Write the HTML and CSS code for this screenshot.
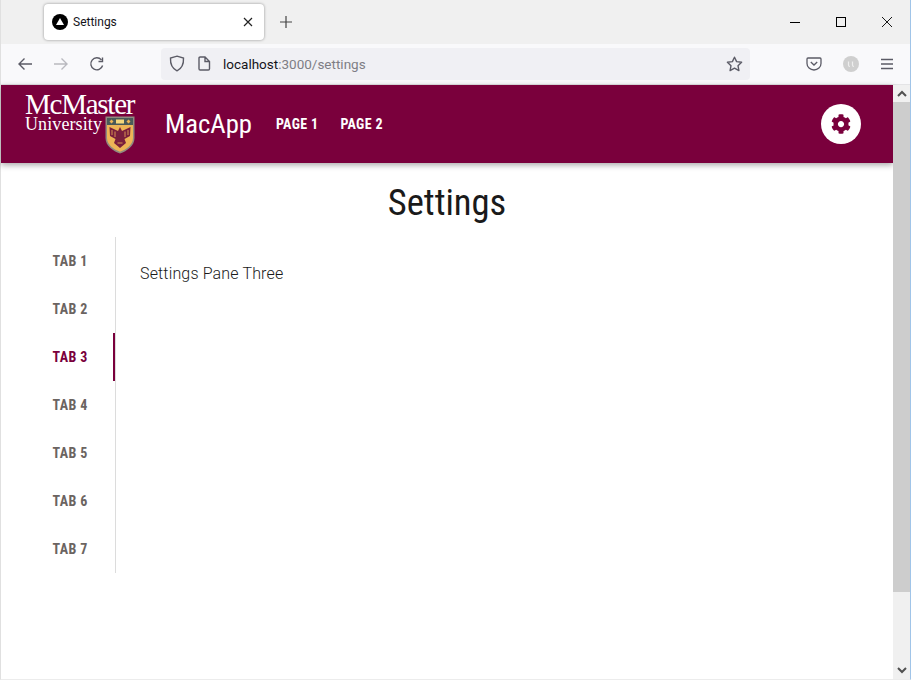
FILE: index.html
```html
<!DOCTYPE html>
<html lang="en">
<head>
    <meta charset="UTF-8">
    <meta name="viewport" content="width=device-width, initial-scale=1.0">
    <title>Settings</title>
    <link rel="stylesheet" href="styles.css">
</head>
<body>
    <div class="window">
        <div class="tabstrip">
            <div class="browser-tab">
                <svg class="favicon" width="16" height="16" viewBox="0 0 16 16"><circle cx="8" cy="8" r="8" fill="#000"/><path d="M8 4 L12 11 H4 Z" fill="#fff"/></svg>
                <span class="browser-tab-title">Settings</span>
                <svg class="tab-close" width="10" height="10" viewBox="0 0 10 10"><path d="M1 1 L9 9 M9 1 L1 9" stroke="#222" stroke-width="1.2"/></svg>
            </div>
            <svg class="new-tab" width="14" height="14" viewBox="0 0 14 14"><path d="M7 1 V13 M1 7 H13" stroke="#444" stroke-width="1.2"/></svg>
            <div class="window-controls">
                <svg width="12" height="12" viewBox="0 0 12 12"><path d="M1 6.5 H11" stroke="#000" stroke-width="1"/></svg>
                <svg width="12" height="12" viewBox="0 0 12 12"><rect x="1.5" y="1.5" width="9" height="9" fill="none" stroke="#000" stroke-width="1"/></svg>
                <svg width="12" height="12" viewBox="0 0 12 12"><path d="M1 1 L11 11 M11 1 L1 11" stroke="#000" stroke-width="0.9"/></svg>
            </div>
        </div>
        <div class="toolbar">
            <svg class="nav-icon" width="16" height="16" viewBox="0 0 16 16"><path d="M15 8 H2 M7.5 2.5 L2 8 L7.5 13.5" fill="none" stroke="#5b5b66" stroke-width="1.4"/></svg>
            <svg class="nav-icon" width="16" height="16" viewBox="0 0 16 16"><path d="M1 8 H14 M8.5 2.5 L14 8 L8.5 13.5" fill="none" stroke="#b9b9bf" stroke-width="1.4"/></svg>
            <svg class="nav-icon" width="16" height="16" viewBox="0 0 16 16"><path d="M13.6 9.5 A6 6 0 1 1 12.4 3.9 M13.5 1.5 V5.5 H9.5" fill="none" stroke="#5b5b66" stroke-width="1.4"/></svg>
            <div class="urlbar">
                <svg width="16" height="17" viewBox="0 0 16 17"><path d="M8 1.2 L14.5 3 C14.8 9 12.8 13.5 8 15.8 C3.2 13.5 1.2 9 1.5 3 Z" fill="none" stroke="#5b5b66" stroke-width="1.4"/></svg>
                <svg class="page-icon" width="14" height="15" viewBox="0 0 14 15"><path d="M2 2.2 Q2 1 3.2 1 H8 L12.5 5.5 V12.8 Q12.5 14 11.3 14 H3.2 Q2 14 2 12.8 Z M8 1 V5.5 H12.5" fill="none" stroke="#5b5b66" stroke-width="1.4"/></svg>
                <span class="url"><span class="url-host">localhost</span>:3000/settings</span>
                <svg class="star" width="17" height="16" viewBox="0 0 17 16"><path d="M8.5 1.2 L10.6 5.6 L15.6 6.3 L12 9.7 L12.9 14.6 L8.5 12.2 L4.1 14.6 L5 9.7 L1.4 6.3 L6.4 5.6 Z" fill="none" stroke="#5b5b66" stroke-width="1.4" stroke-linejoin="round"/></svg>
            </div>
            <svg class="pocket" width="16" height="14" viewBox="0 0 16 14"><path d="M1 2 Q1 1 2 1 H14 Q15 1 15 2 V6.5 A7 6.5 0 0 1 1 6.5 Z M4.8 5 L8 8 L11.2 5" fill="none" stroke="#5b5b66" stroke-width="1.3"/></svg>
            <svg class="avatar" width="16" height="16" viewBox="0 0 16 16"><circle cx="8" cy="8" r="8" fill="#cfcfcf"/><path d="M5.5 5.5 V9 Q5.5 10.5 7 10.5 M9.5 5.5 V9 Q9.5 10.5 11 10.5" fill="none" stroke="#eee" stroke-width="1.2"/></svg>
            <svg class="burger" width="14" height="12" viewBox="0 0 14 12"><path d="M1 1.5 H13 M1 6 H13 M1 10.5 H13" stroke="#5b5b66" stroke-width="1.3"/></svg>
        </div>
        <div class="viewport">
            <div class="page">
                <header class="appbar">
                    <div class="logo">
                        <div class="logo-name">McMaster</div>
                        <div class="logo-row">
                            <span class="logo-sub">University</span>
                            <svg class="crest" width="30" height="38" viewBox="0 0 30 38">
                                <path d="M0.5 0.5 H29.5 V22 C29.5 30 22 35 15 37.5 C8 35 0.5 30 0.5 22 Z" fill="#8f8a80"/>
                                <rect x="2" y="2" width="26" height="7" fill="#4a5a58"/>
                                <path d="M2 9 H28 V22 C28 29 21 33.5 15 35.8 C9 33.5 2 29 2 22 Z" fill="#edb456"/>
                                <rect x="11" y="3.5" width="8" height="4" fill="#f3d77c"/>
                                <path d="M6.5 3.5 L8.5 5.5 L6.5 7.5 L4.5 5.5 Z M23.5 3.5 L25.5 5.5 L23.5 7.5 L21.5 5.5 Z" fill="#edb456"/>
                                <path d="M15 11 L17 15 L25.5 11 L25 20 L19.5 23 L21 27 L15 32 L9 27 L10.5 23 L5 20 L4.5 11 L13 15 Z" fill="#7a1f3c"/>
                                <path d="M7 14 V19 M10 15.5 V21 M23 14 V19 M20 15.5 V21 M12.5 27 H17.5" stroke="#edb456" stroke-width="0.8"/>
                            </svg>
                        </div>
                    </div>
                    <a class="brand">MacApp</a>
                    <nav class="appnav">
                        <a class="appnav-link">PAGE 1</a>
                        <a class="appnav-link">PAGE 2</a>
                    </nav>
                    <button class="settings-btn">
                        <svg width="20" height="20" viewBox="0 0 512 512"><path fill="#7a003c" d="M487.4 315.7l-42.6-24.6c4.3-23.2 4.3-47 0-70.2l42.6-24.6c4.9-2.8 7.1-8.6 5.5-14-11.1-35.6-30-67.8-54.7-94.6-3.8-4.1-10-5.1-14.8-2.3L380.8 110c-17.9-15.4-38.5-27.3-60.8-35.1V25.8c0-5.6-3.9-10.5-9.4-11.7-36.7-8.2-74.3-7.8-109.2 0-5.5 1.2-9.4 6.1-9.4 11.7V75c-22.2 7.9-42.8 19.8-60.8 35.1L88.7 85.5c-4.9-2.8-11-1.9-14.8 2.3-24.7 26.7-43.6 58.9-54.7 94.6-1.7 5.4.6 11.2 5.5 14L67.3 221c-4.3 23.2-4.3 47 0 70.2l-42.6 24.6c-4.9 2.8-7.1 8.6-5.5 14 11.1 35.6 30 67.8 54.7 94.6 3.8 4.1 10 5.1 14.8 2.3l42.6-24.6c17.9 15.4 38.5 27.3 60.8 35.1v49.2c0 5.6 3.9 10.5 9.4 11.7 36.7 8.2 74.3 7.8 109.2 0 5.5-1.2 9.4-6.1 9.4-11.7v-49.2c22.2-7.9 42.8-19.8 60.8-35.1l42.6 24.6c4.9 2.8 11 1.9 14.8-2.3 24.7-26.7 43.6-58.9 54.7-94.6 1.5-5.5-.7-11.3-5.6-14.1zM256 336c-44.1 0-80-35.9-80-80s35.9-80 80-80 80 35.9 80 80-35.9 80-80 80z"/></svg>
                    </button>
                </header>
                <h1 class="page-title">Settings</h1>
                <div class="settings">
                    <div class="tablist">
                        <div class="tab">TAB 1</div>
                        <div class="tab">TAB 2</div>
                        <div class="tab tab-active">TAB 3</div>
                        <div class="tab">TAB 4</div>
                        <div class="tab">TAB 5</div>
                        <div class="tab">TAB 6</div>
                        <div class="tab">TAB 7</div>
                    </div>
                    <div class="pane">Settings Pane Three</div>
                </div>
            </div>
            <div class="scrollbar">
                <div class="scroll-btn">
                    <svg width="10" height="7" viewBox="0 0 10 7"><path d="M1 6 L5 2 L9 6" fill="none" stroke="#505050" stroke-width="2"/></svg>
                </div>
                <div class="scroll-thumb"></div>
                <div class="scroll-track"></div>
                <div class="scroll-btn">
                    <svg width="10" height="7" viewBox="0 0 10 7"><path d="M1 1 L5 5 L9 1" fill="none" stroke="#505050" stroke-width="2"/></svg>
                </div>
            </div>
        </div>
    </div>
</body>
</html>
```

FILE: styles.css
```css
* {
    box-sizing: border-box;
}
html, body {
    margin: 0;
    height: 100%;
    overflow: hidden;
}
body {
    font-family: Roboto, sans-serif;
    background-color: #fff;
}
.window {
    height: 680px;
    display: flex;
    flex-direction: column;
    border-left: 1px solid #e0e0e0;
    border-right: 1px solid #a0c4e8;
    border-bottom: 1px solid #ececec;
}

/* browser chrome */
.tabstrip {
    height: 44px;
    display: flex;
    align-items: center;
    background-color: #f0f0f0;
    padding-left: 43px;
}
.browser-tab {
    width: 220px;
    height: 36px;
    display: flex;
    align-items: center;
    padding: 0 11px 0 8px;
    background-color: #fff;
    border-radius: 4px;
    box-shadow: 0 0 3px rgba(0,0,0,0.4);
}
.browser-tab-title {
    margin-left: 5px;
    flex: 1;
    font-size: 12px;
    color: #15141a;
}
.new-tab {
    margin-left: 15px;
}
.window-controls {
    margin-left: auto;
    display: flex;
    gap: 34px;
    padding-right: 17px;
}
.toolbar {
    height: 41px;
    display: flex;
    align-items: center;
    background-color: #f9f9fb;
    padding-left: 16px;
    border-bottom: 1px solid #e4e4e6;
}
.nav-icon {
    margin-right: 20px;
}
.urlbar {
    width: 589px;
    height: 32px;
    margin-left: 36px;
    margin-top: -1px;
    display: flex;
    align-items: center;
    padding: 0 7px 0 8px;
    background-color: #f0f0f4;
    border-radius: 4px;
}
.page-icon {
    margin-left: 12px;
}
.url {
    margin-left: 12px;
    font-size: 13.5px;
    color: #7e7e85;
}
.url-host {
    color: #15141a;
}
.star {
    margin-left: auto;
}
.pocket {
    margin-left: 56px;
}
.avatar {
    margin-left: 21px;
}
.burger {
    margin-left: 21px;
}

/* page */
.viewport {
    flex: 1;
    display: flex;
    min-height: 0;
}
.page {
    flex: 1;
    min-width: 0;
}
.appbar {
    height: 78px;
    display: flex;
    align-items: center;
    padding: 0 32px 0 24px;
    background-color: #7a003c;
    box-shadow: 0 2px 6px rgba(0,0,0,0.35);
    color: #fff;
}
.logo {
    width: 112px;
    height: 78px;
    padding-top: 7px;
    flex-shrink: 0;
}
.logo-name {
    font-family: "Liberation Serif", serif;
    font-size: 29px;
    line-height: 24px;
    letter-spacing: -1.25px;
    white-space: nowrap;
}
.logo-row {
    display: flex;
    align-items: flex-start;
}
.logo-sub {
    font-family: "Liberation Serif", serif;
    font-size: 18px;
    line-height: 18px;
    letter-spacing: 0.1px;
    margin-top: -1px;
}
.crest {
    margin-left: 3px;
    flex-shrink: 0;
}
.brand {
    margin-left: 28px;
    font-family: "Roboto Condensed", "Liberation Sans Narrow", Roboto, sans-serif;
    font-stretch: condensed;
    font-size: 26.7px;
}
.appnav {
    display: flex;
    gap: 22px;
    margin-left: 24px;
}
.appnav-link {
    font-family: "Roboto Condensed", "Liberation Sans Narrow", Roboto, sans-serif;
    font-stretch: condensed;
    font-size: 14px;
    font-weight: 700;
    letter-spacing: 0.35px;
}
.settings-btn {
    margin-left: auto;
    width: 40px;
    height: 40px;
    padding: 0;
    border: none;
    border-radius: 50%;
    background-color: #fff;
    display: flex;
    align-items: center;
    justify-content: center;
}
.page-title {
    margin: 0;
    padding-top: 18px;
    height: 74px;
    text-align: center;
    font-family: "Roboto Condensed", "Liberation Sans Narrow", Roboto, sans-serif;
    font-stretch: condensed;
    font-size: 36.6px;
    line-height: 44px;
    font-weight: 400;
    color: #1a1a1a;
}
.settings {
    display: flex;
}
.tablist {
    width: 115px;
    border-right: 1px solid #dcdcdc;
}
.tab {
    height: 48px;
    display: flex;
    align-items: center;
    padding-left: 51.5px;
    font-family: "Roboto Condensed", "Liberation Sans Narrow", Roboto, sans-serif;
    font-stretch: condensed;
    font-size: 14px;
    font-weight: 700;
    letter-spacing: 0.4px;
    color: #6b6461;
}
.tab-active {
    color: #7a003c;
    border-right: 2px solid #7a003c;
}
.pane {
    padding: 25px 24px;
    font-size: 16px;
    font-weight: 300;
    letter-spacing: 0.15px;
    line-height: 24px;
    color: #1a1a1a;
}

/* scrollbar */
.scrollbar {
    width: 17px;
    display: flex;
    flex-direction: column;
    background-color: #f0f0f0;
}
.scroll-btn {
    height: 17px;
    display: flex;
    align-items: center;
    justify-content: center;
}
.scroll-thumb {
    height: 490px;
    background-color: #cdcdcd;
}
.scroll-track {
    flex: 1;
}
```
